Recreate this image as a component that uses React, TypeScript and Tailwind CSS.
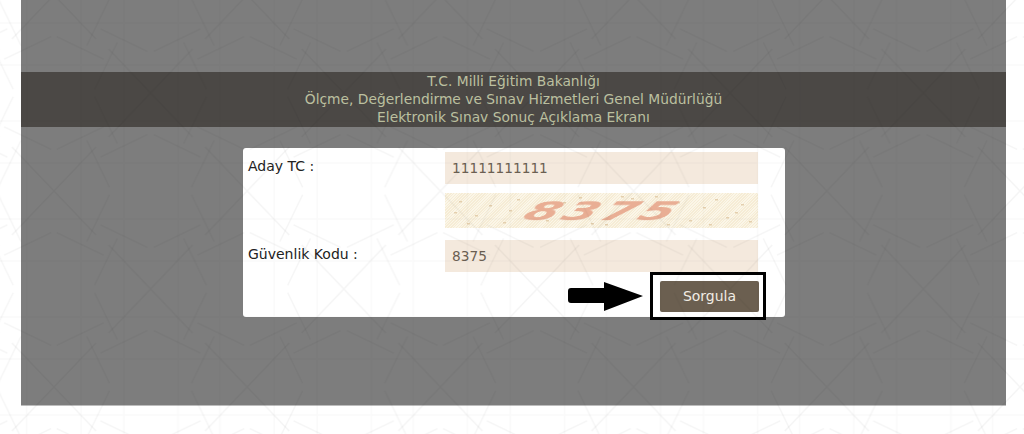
import React from 'react';

const FONT = "font-['DejaVu_Sans','Liberation_Sans',sans-serif]";

// speckles on the captcha image
const SPECKS = [
  [14, 8], [30, 22], [44, 12], [58, 29], [72, 6], [88, 18], [101, 27], [118, 9], [134, 4], [146, 30],
  [186, 5], [210, 3], [232, 9], [244, 27], [258, 14], [270, 6], [281, 24], [296, 11], [304, 28], [22, 30],
  [64, 17], [108, 14], [160, 31], [222, 31], [290, 19], [9, 19], [176, 3], [264, 31],
];

const TILE_W = 193.2;
const TILE_H = 196;

// crossing points of the long diagonals, and the pinwheels half way between them
const CROSSES = [[0, 0], [TILE_W, 0], [0, TILE_H], [TILE_W, TILE_H], [TILE_W / 2, TILE_H / 2]];
const WHEELS = [
  [48, 49, 1], [145, 49, -1], [48, 147, -1], [145, 147, 1],
];

const crossPath = CROSSES.map(([x, y]) =>
  `M${x - 42} ${y - 44} L${x + 42} ${y + 44} M${x + 42} ${y - 44} L${x - 42} ${y + 44}`
).join(' ');

const wheelPath = WHEELS.map(([cx, cy, dir]) => {
  let d = '';
  for (let i = 0; i < 4; i++) {
    const a = (i * Math.PI) / 2 + dir * 0.45;
    const ox = cx + 13 * Math.cos(a);
    const oy = cy + 13 * Math.sin(a);
    const tx = -Math.sin(a) * dir;
    const ty = Math.cos(a) * dir;
    d += `M${ox - tx * 8} ${oy - ty * 8} L${ox + tx * 44} ${oy + ty * 44} `;
  }
  return d;
}).join('');

const Pattern = () => (
  <svg className="absolute inset-0 w-full h-full pointer-events-none" xmlns="http://www.w3.org/2000/svg">
    <defs>
      <pattern id="tile" x="54" y="191" width={TILE_W} height={TILE_H} patternUnits="userSpaceOnUse">
        <g fill="none" stroke="#000" strokeWidth="1.4">
          <path d={crossPath} strokeOpacity="0.04" />
          <path d={wheelPath} strokeOpacity="0.035" />
          <path d="M27 0 V196 M70 0 V196 M124 0 V196 M166 0 V196 M0 28 H194 M0 70 H194 M0 126 H194 M0 168 H194" strokeOpacity="0.018" />
        </g>
      </pattern>
    </defs>
    <rect width="100%" height="100%" fill="url(#tile)" />
  </svg>
);

const Captcha = () => (
  <div className="relative h-[35px] overflow-hidden bg-[repeating-linear-gradient(135deg,#f6ecd5_0px,#f6ecd5_1px,#fbf6e8_1px,#fbf6e8_2px)] flex items-center justify-center">
    <svg className="absolute inset-0 w-full h-full" xmlns="http://www.w3.org/2000/svg">
      {SPECKS.map(([x, y], i) => (
        <rect key={i} x={x} y={y} width="3" height="1.5" fill="#e4cfae" />
      ))}
    </svg>
    <span className="relative ml-[3px] text-[#e9ae94] text-[26px] font-bold italic tracking-[2px] leading-none scale-x-[1.9] skew-x-[-20deg] blur-[0.4px]">8375</span>
  </div>
);

const Field = ({ value }: { value: string }) => (
  <input
    readOnly
    value={value}
    className="block w-full h-[32px] px-[7px] bg-[#f4e9dd] text-[#6b5f52] text-[13.7px] outline-none"
  />
);

export default function App() {
  return (
    <div className={`relative h-[434px] w-[1024px] overflow-hidden bg-white ${FONT}`}>
      <div className="mx-[21px] mr-[18px] h-[406px] bg-[#7d7d7d] border-b border-[#bdbdbd] pt-[72px]">
        <div className="h-[55px] bg-[#4b4845] text-[#bcc0a0] text-[13.8px] leading-[18px] text-center">
          <div>T.C. Milli Eğitim Bakanlığı</div>
          <div>Ölçme, Değerlendirme ve Sınav Hizmetleri Genel Müdürlüğü</div>
          <div>Elektronik Sınav Sonuç Açıklama Ekranı</div>
        </div>

        <div className="ml-[222px] mt-[21px] w-[542px] h-[169px] bg-white rounded-[3px] pt-[4px] pl-[5px] pr-[27px]">
          <div className="grid grid-cols-[197px_1fr] items-start text-[#222] text-[14px]">
            <div className="pt-[4px]">Aday TC :</div>
            <Field value="11111111111" />

            <div className="h-[35px] mt-[9px]" />
            <div className="mt-[9px]"><Captcha /></div>

            <div className="mt-[12px] pt-[4px]">Güvenlik Kodu :</div>
            <div className="mt-[12px]"><Field value="8375" /></div>
          </div>

          <div className="mt-[9px] flex items-center justify-end gap-[17px]">
            <svg className="w-[75px] h-[30px]" viewBox="0 0 75 30" xmlns="http://www.w3.org/2000/svg">
              <path d="M3 6 H36 V0 L75 14 L36 29 V21 H3 Q0 21 0 18 V9 Q0 6 3 6 Z" fill="#000" />
            </svg>
            <button className="relative -mr-[1px] w-[99px] h-[31px] bg-[#6b5f50] rounded-[2px] text-[#f1ece4] text-[14px]">
              Sorgula
              <span className="absolute -left-[10px] -top-[9px] w-[116px] h-[48px] border-[3px] border-black" />
            </button>
          </div>
        </div>
      </div>
      <Pattern />
    </div>
  );
}
